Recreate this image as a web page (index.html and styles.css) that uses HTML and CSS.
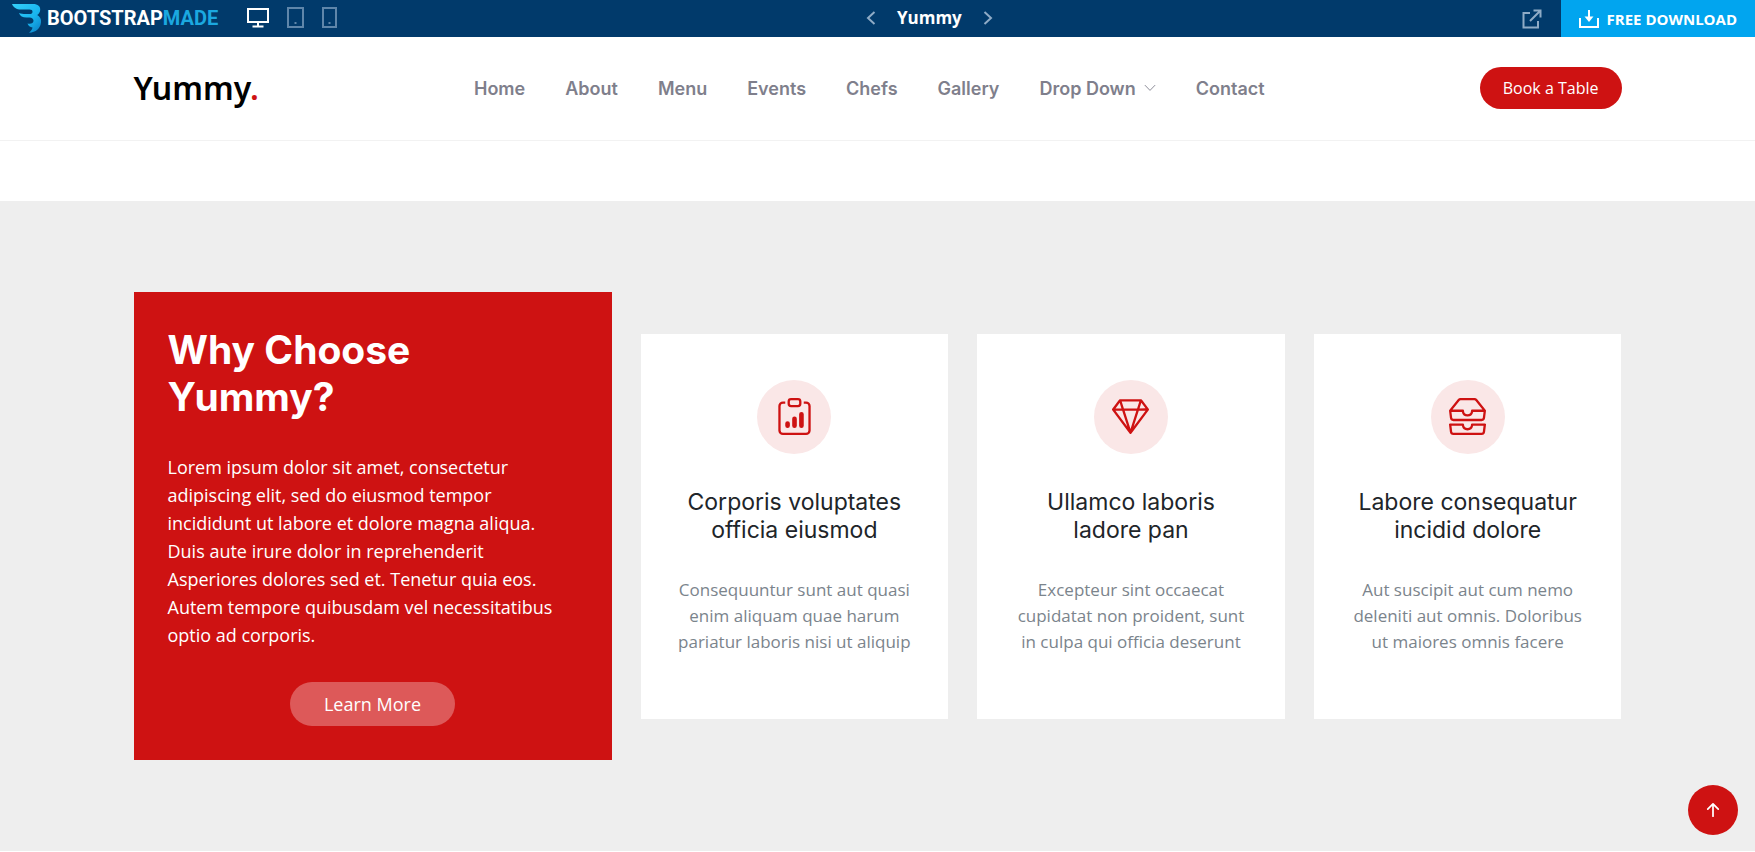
FILE: index.html
```html
<!DOCTYPE html>
<html lang="en">
<head>
<meta charset="utf-8">
<meta name="viewport" content="width=device-width, initial-scale=1">
<title>Yummy</title>
<link rel="stylesheet" href="styles.css">
</head>
<body>
<div class="topbar">
  <div class="topbar-left">
    <a class="brand" href="#" aria-label="BootstrapMade">
      <svg class="brand-mark" viewBox="0 0 30 30" aria-hidden="true">
        <defs>
          <linearGradient id="wing" x1="0" y1="0" x2="1" y2="1"><stop offset="0" stop-color="#35d0fb"/><stop offset="0.6" stop-color="#18b4ee"/><stop offset="1" stop-color="#0a7cc4"/></linearGradient>
        </defs>
        <path fill="url(#wing)" d="M0 1h21c5 0 7.500 2.500 7.200 6-.2 2.500-1.500 4-3 5 2.500 1.300 4.300 4 3.800 7.500C28.300 25.500 24 29.500 17 29.700c2-1.500 3.200-3.200 3.500-5.200-2.500-.3-4.300-1.800-5-4 3.500.8 6-.3 6-2.700 0-2-1.500-3.300-4-3.300h-3c-4 0-6.500-1.500-7.500-4.500 2 .8 4 1 6.500 1h4c2 0 3-.8 3-2.300S19.500 6.500 17.500 6.500H9C4.500 6.500 1.300 4.500 0 1z"/>
      </svg>
      <span class="brand-text">BOOTSTRAP<span class="brand-accent">MADE</span></span>
    </a>
    <div class="devices">
      <button class="device active" type="button" aria-label="Desktop">
        <svg width="22" height="20" viewBox="0 0 22 20" fill="none" stroke="currentColor" stroke-width="2"><path d="M1 1h20v13H1zM11 14v4M5.500 18.500h11"/></svg>
      </button>
      <button class="device" type="button" aria-label="Tablet">
        <svg width="17" height="21" viewBox="0 0 17 21" fill="none" stroke="currentColor" stroke-width="2"><path d="M1 1h15v19H1z"/><path d="M7.500 16h2"/></svg>
      </button>
      <button class="device" type="button" aria-label="Phone">
        <svg width="15" height="21" viewBox="0 0 15 21" fill="none" stroke="currentColor" stroke-width="2"><path d="M1 1h13v19H1z"/><path d="M6.500 16h2"/></svg>
      </button>
    </div>
  </div>
  <div class="topbar-center">
    <a class="arrow" href="#" aria-label="Previous"><svg width="10" height="14" viewBox="0 0 10 14" fill="none" stroke="currentColor" stroke-width="2"><path d="M8.500 1 2 7l6.500 6"/></svg></a>
    <span class="template-name">Yummy</span>
    <a class="arrow" href="#" aria-label="Next"><svg width="10" height="14" viewBox="0 0 10 14" fill="none" stroke="currentColor" stroke-width="2"><path d="M1.500 1 8 7l-6.500 6"/></svg></a>
  </div>
  <div class="topbar-right">
    <a class="external" href="#" aria-label="Open in new window"><svg width="20" height="20" viewBox="0 0 20 20" fill="none" stroke="currentColor" stroke-width="2"><path d="M8 4H1.500v14.500H16V12M11.500 1.500h7v7M18.500 1.500 8 12"/></svg></a>
    <a class="download" href="#">
      <svg width="20" height="18" viewBox="0 0 20 18" fill="none" stroke="currentColor" stroke-width="2"><path d="M1 8v9h18V8"/><path d="M10 0v8"/><path d="M5.500 6.500h9L10 12z" fill="currentColor" stroke="none"/></svg>
      FREE DOWNLOAD
    </a>
  </div>
</div>

<header class="header">
  <div class="container header-row">
    <a class="logo" href="#">Yummy<span class="dot">.</span></a>
    <nav class="nav">
      <a href="#">Home</a>
      <a href="#">About</a>
      <a href="#">Menu</a>
      <a href="#">Events</a>
      <a href="#">Chefs</a>
      <a href="#">Gallery</a>
      <a href="#">Drop Down <svg width="12" height="12" viewBox="0 0 16 16" fill="none" stroke="currentColor" stroke-linecap="round" stroke-linejoin="round" stroke-width="1.200"><path d="M1.500 4.500 8 11.200l6.500-6.700"/></svg></a>
      <a href="#">Contact</a>
    </nav>
    <a class="book" href="#">Book a Table</a>
  </div>
</header>

<main>
  <section class="why">
    <div class="container why-grid">
      <div class="why-box">
        <h2>Why Choose Yummy?</h2>
        <p>Lorem ipsum dolor sit amet, consectetur adipiscing elit, sed do eiusmod tempor incididunt ut labore et dolore magna aliqua. Duis aute irure dolor in reprehenderit Asperiores dolores sed et. Tenetur quia eos. Autem tempore quibusdam vel necessitatibus optio ad corporis.</p>
        <a class="more" href="#">Learn More</a>
      </div>
      <div class="cards">
        <article class="card">
          <div class="icon"><svg viewBox="0 0 16 16" fill="currentColor" aria-hidden="true"><path d="M4 11a1 1 0 1 1 2 0v1a1 1 0 1 1-2 0zm6-4a1 1 0 1 1 2 0v5a1 1 0 1 1-2 0zM7 9a1 1 0 0 1 2 0v3a1 1 0 1 1-2 0z"/><path d="M4 1.500H3a2 2 0 0 0-2 2V14a2 2 0 0 0 2 2h10a2 2 0 0 0 2-2V3.500a2 2 0 0 0-2-2h-1v1h1a1 1 0 0 1 1 1V14a1 1 0 0 1-1 1H3a1 1 0 0 1-1-1V3.500a1 1 0 0 1 1-1h1z"/><path d="M9.500 1a.5.5 0 0 1 .5.5v1a.5.5 0 0 1-.5.5h-3a.5.5 0 0 1-.5-.5v-1a.5.5 0 0 1 .5-.5zm-3-1A1.500 1.500 0 0 0 5 1.500v1A1.500 1.500 0 0 0 6.500 4h3A1.500 1.500 0 0 0 11 2.500v-1A1.500 1.500 0 0 0 9.500 0z"/></svg></div>
          <h3>Corporis voluptates officia eiusmod</h3>
          <p>Consequuntur sunt aut quasi enim aliquam quae harum pariatur laboris nisi ut aliquip</p>
        </article>
        <article class="card">
          <div class="icon"><svg viewBox="0 0 16 16" fill="currentColor" aria-hidden="true"><path d="M3.100.7a.5.5 0 0 1 .4-.2h9a.5.5 0 0 1 .4.2l2.976 3.974c.149.185.156.45.01.644L8.400 15.300a.5.5 0 0 1-.8 0L.1 5.300a.5.5 0 0 1 0-.6zm11.386 3.785-1.806-2.410-.776 2.413zm-3.633.004.961-2.989H4.186l.963 2.995zM5.470 5.495 8 13.366l2.532-7.876zm-1.371-.999-.78-2.422-1.818 2.425zM1.499 5.500l5.113 6.817-2.192-6.820zm7.889 6.817 5.123-6.830-2.928.002z"/></svg></div>
          <h3>Ullamco laboris ladore pan</h3>
          <p>Excepteur sint occaecat cupidatat non proident, sunt in culpa qui officia deserunt</p>
        </article>
        <article class="card">
          <div class="icon"><svg viewBox="0 0 16 16" fill="currentColor" aria-hidden="true"><path d="M4.980 1a.5.5 0 0 0-.39.188L1.540 5H6a.5.5 0 0 1 .5.5 1.500 1.500 0 0 0 3 0A.5.5 0 0 1 10 5h4.460l-3.050-3.812A.5.5 0 0 0 11.020 1zm9.954 5H10.450a2.500 2.500 0 0 1-4.900 0H1.066l.32 2.562A.5.5 0 0 0 1.884 9h12.234a.5.5 0 0 0 .496-.438zM3.809.563A1.500 1.500 0 0 1 4.981 0h6.038a1.500 1.500 0 0 1 1.172.563l3.700 4.625a.5.5 0 0 1 .105.374l-.39 3.124A1.500 1.500 0 0 1 14.117 10H1.883A1.500 1.500 0 0 1 .394 8.686l-.39-3.124a.5.5 0 0 1 .106-.374zM.125 11.170A.5.5 0 0 1 .5 11H6a.5.5 0 0 1 .5.5 1.500 1.500 0 0 0 3 0 .5.5 0 0 1 .5-.5h5.500a.5.5 0 0 1 .496.562l-.39 3.124A1.500 1.500 0 0 1 14.117 16H1.883a1.500 1.500 0 0 1-1.489-1.314l-.39-3.124a.5.5 0 0 1 .121-.393zm.941.83.32 2.562a.5.5 0 0 0 .497.438h12.234a.5.5 0 0 0 .496-.438l.32-2.562H10.450a2.500 2.500 0 0 1-4.900 0z"/></svg></div>
          <h3>Labore consequatur incidid dolore</h3>
          <p>Aut suscipit aut cum nemo deleniti aut omnis. Doloribus ut maiores omnis facere</p>
        </article>
      </div>
    </div>
  </section>
</main>

<a class="scroll-top" href="#" aria-label="Back to top"><svg width="28" height="28" viewBox="0 0 16 16" fill="currentColor"><path fill-rule="evenodd" d="M8 12a.5.5 0 0 0 .5-.5V5.707l2.146 2.147a.5.5 0 0 0 .708-.708l-3-3a.5.5 0 0 0-.708 0l-3 3a.5.5 0 1 0 .708.708L7.500 5.707V11.500a.5.5 0 0 0 .5.5"/></svg></a>
</body>
</html>
```
FILE: styles.css
```css
* { box-sizing: border-box; }

body {
  margin: 0;
  background: #fff;
  color: #212529;
  font-family: "Open Sans", "Noto Sans", sans-serif;
  font-size: 18px;
}

a { color: inherit; text-decoration: none; }
h2, h3, p { margin: 0; }
svg { display: block; }

.container {
  max-width: 1488px;
  margin: 0 auto;
}

/* Preview bar */
.topbar {
  display: flex;
  justify-content: space-between;
  height: 37px;
  background: #013a6b;
  color: #fff;
}

.topbar-left,
.topbar-center,
.topbar-right,
.devices,
.brand {
  display: flex;
  align-items: center;
}

.topbar-left,
.topbar-center { padding-bottom: 2px; }

.topbar-left { gap: 29px; padding-left: 12px; }
.brand { gap: 5px; }
.brand-mark { width: 30px; height: 30px; }

.brand-text {
  font-family: Roboto, sans-serif;
  font-size: 20px;
  font-weight: 700;
  line-height: 28px;
}

.brand-accent { color: #1ba8e0; }
.devices { gap: 18px; }

.device {
  padding: 0;
  border: 0;
  background: none;
  color: #5f86aa;
}

.device.active { color: #fff; }
.topbar-center { gap: 21px; }
.arrow { color: #8fabc6; }

.template-name {
  font-size: 17px;
  font-weight: 700;
}

.topbar-right { gap: 19px; }
.external { color: #8fabc6; }

.download {
  display: flex;
  align-items: center;
  gap: 8px;
  height: 100%;
  padding: 0 18px;
  background: #01a5ef;
  font-size: 15px;
  font-weight: 700;
}

/* Site header */
.header {
  padding: 30px 0 31px;
  border-bottom: 1px solid #f2f2f2;
}

.header-row {
  display: flex;
  align-items: center;
  justify-content: space-between;
}

.logo {
  color: #000;
  font-family: "Noto Sans", sans-serif;
  font-size: 32px;
  font-weight: 600;
  line-height: 42px;
}

.dot { color: #ce1212; }

.nav {
  display: flex;
  gap: 40px;
  color: #7f7f8c;
  font-family: Inter, sans-serif;
  font-size: 18px;
  font-weight: 600;
}

.nav a {
  display: flex;
  align-items: center;
  gap: 8px;
}

.book {
  padding: 9px 23px;
  border-radius: 50px;
  background: #ce1212;
  color: #fff;
  font-size: 16px;
  line-height: 24px;
}

/* Why us */
.why {
  margin-top: 60px;
  padding: 91px 0;
  background: #eee;
}

.why-grid {
  display: grid;
  grid-template-columns: 478fr 981fr;
  align-items: center;
  gap: 29px;
}

.why-box {
  display: flex;
  flex-direction: column;
  padding: 34px;
  background: #ce1212;
  color: #fff;
}

.why-box h2 {
  max-width: 300px;
  margin-bottom: 33px;
  font-family: Inter, sans-serif;
  font-size: 39px;
  font-weight: 700;
  line-height: 47px;
}

.why-box p {
  max-width: 400px;
  margin-bottom: 33px;
  line-height: 28px;
}

.more {
  align-self: center;
  padding: 8px 34px;
  border-radius: 50px;
  background: rgba(255, 255, 255, 0.3);
  line-height: 28px;
}

.cards {
  display: grid;
  grid-template-columns: repeat(3, 1fr);
  gap: 29px;
}

.card {
  display: flex;
  flex-direction: column;
  align-items: center;
  padding: 46px 34px 64px;
  background: #fff;
  text-align: center;
}

.icon {
  display: grid;
  place-items: center;
  width: 74px;
  height: 74px;
  margin-bottom: 34px;
  border-radius: 50%;
  background: #fae7e7;
  color: #ce1212;
}

.icon svg { width: 37px; height: 37px; }

.card h3 {
  margin-bottom: 33px;
  font-family: Inter, sans-serif;
  font-size: 23px;
  font-weight: 400;
  line-height: 28px;
}

.card p {
  color: #7b848c;
  font-size: 17px;
  line-height: 26px;
}

.scroll-top {
  position: fixed;
  right: 17px;
  bottom: 17px;
  display: grid;
  place-items: center;
  width: 50px;
  height: 50px;
  border-radius: 50%;
  background: #ce1212;
  color: #fff;
}
```
